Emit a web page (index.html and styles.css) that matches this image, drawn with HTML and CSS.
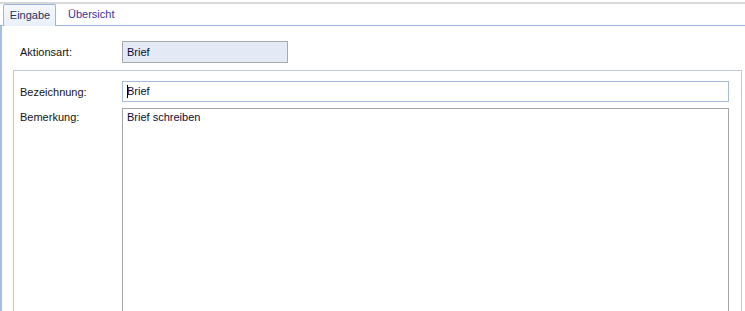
FILE: index.html
```html
<!DOCTYPE html>
<html lang="de">
<head>
<meta charset="utf-8">
<title>Aktion</title>
<link rel="stylesheet" href="styles.css">
</head>
<body>
<div class="topline"></div>
<div class="tabstrip">
  <div class="tab active">Eingabe</div>
  <div class="tab">Übersicht</div>
</div>
<div class="panel">
  <div class="row-top">
    <div class="label">Aktionsart:</div>
    <div class="field readonly">Brief</div>
  </div>
  <div class="group">
    <div class="label">Bezeichnung:</div>
    <div class="field focused"><span class="caret"></span>Brief</div>
    <div class="label label-top">Bemerkung:</div>
    <div class="memo">Brief schreiben</div>
  </div>
</div>
</body>
</html>
```
FILE: styles.css
```css
html, body {
  margin: 0;
  padding: 0;
  background: #ffffff;
  overflow: hidden;
}
body {
  width: 745px;
  height: 311px;
  font-family: "Liberation Sans", Arial, sans-serif;
  font-size: 11px;
  color: #141414;
}
.topline {
  margin-top: 2px;
  height: 2px;
  background: #d8d8d8;
}
.tabstrip {
  display: flex;
  height: 21px;
  border-bottom: 1px solid #9db5da;
  padding-left: 3px;
}
.tab {
  box-sizing: border-box;
  height: 21px;
  line-height: 20px;
  padding: 0 12px;
  color: #3b3596;
}
.tab.active {
  width: 53px;
  height: 22px;
  padding: 0;
  text-align: center;
  padding-left: 1px;
  border: 1px solid #9db5da;
  border-bottom: none;
  border-radius: 2px 2px 0 0;
  background: linear-gradient(#f4f8fc, #e9f0f9);
  color: #1f3566;
  margin-bottom: -1px;
}
.panel {
  box-sizing: border-box;
  border-left: 2px solid #a4bfe6;
  height: 285px;
}
.row-top {
  display: flex;
  align-items: center;
  padding-top: 15px;
  padding-left: 18px;
}
.row-top .label {
  width: 102px;
}
.field {
  box-sizing: border-box;
  height: 22px;
  line-height: 20px;
  padding-left: 4px;
  color: #0c0c3a;
}
.readonly {
  width: 166px;
  background: #e3eaf6;
  border: 1px solid #a9a9a9;
}
.group {
  box-sizing: border-box;
  margin-top: 7px;
  margin-left: 11px;
  width: 729px;
  height: 241px;
  border: 1px solid #bcc8d6;
  border-bottom: none;
  padding: 10px 12px 0 6px;
  display: grid;
  grid-template-columns: 102px 1fr;
  grid-template-rows: 21px 1fr;
  row-gap: 6px;
  align-items: center;
}
.focused {
  height: 21px;
  line-height: 19px;
  border: 1px solid #a7bcdd;
  background: #ffffff;
}
.caret {
  display: inline-block;
  width: 1px;
  height: 13px;
  background: #000000;
  vertical-align: -3px;
  margin-right: -1px;
}
.label-top {
  align-self: start;
  padding-top: 3px;
}
.memo {
  box-sizing: border-box;
  align-self: stretch;
  border: 1px solid #a5a5a5;
  border-bottom: none;
  padding: 2px 4px;
  color: #0c0c3a;
}
```
